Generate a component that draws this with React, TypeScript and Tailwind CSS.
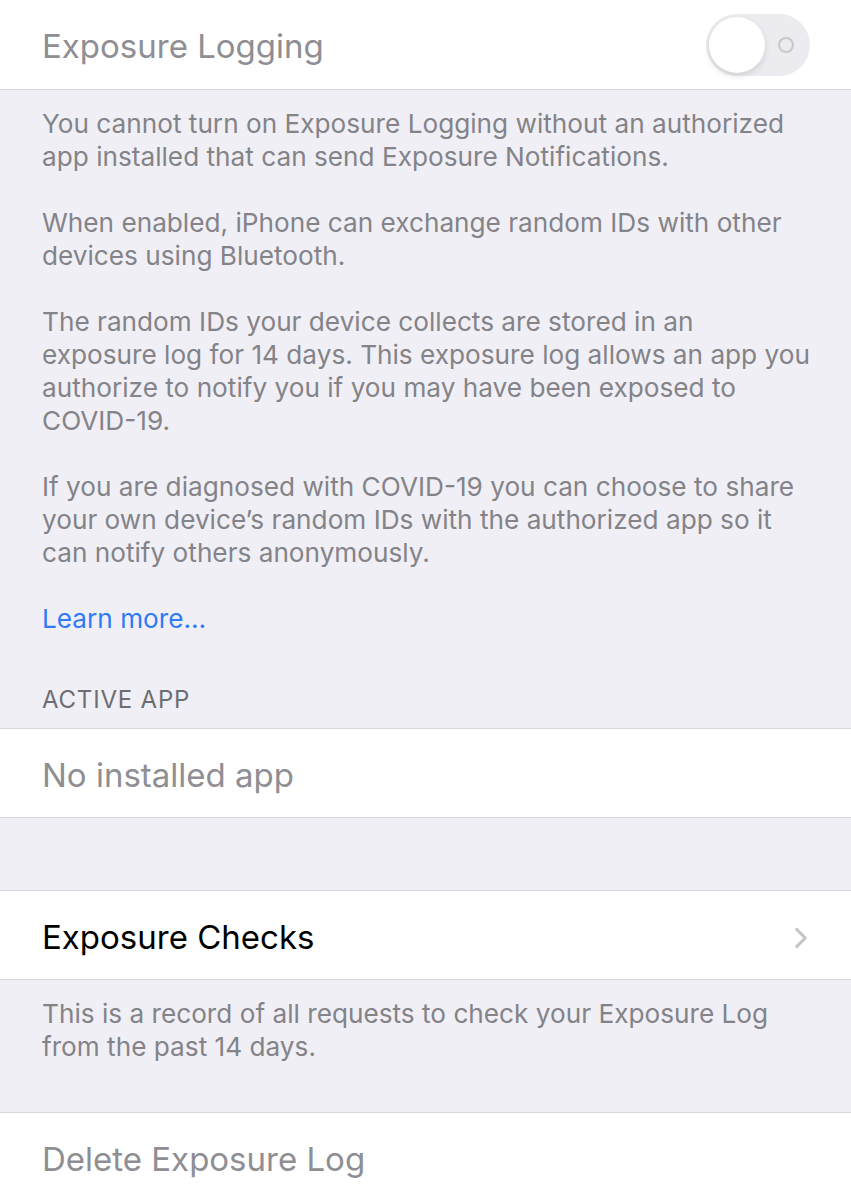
import { ChevronRight } from 'lucide-react';

const font = { fontFamily: 'Inter, "Noto Sans", sans-serif' };

function Toggle() {
  return (
    <div className="relative w-[104px] h-[62px] rounded-full bg-[#ececf0]">
      <div className="absolute left-[3px] top-[3px] w-[56px] h-[56px] rounded-full bg-white shadow-[0_3px_6px_rgba(0,0,0,0.12)]" />
      <div className="absolute left-[72px] top-[23px] w-[16px] h-[16px] rounded-full border-2 border-[#c8c8cc]" />
    </div>
  );
}

function Row({ children, className = '' }: { children: React.ReactNode; className?: string }) {
  return (
    <div className={`bg-white h-[90px] flex items-center justify-between pl-[42px] pr-[41px] border-b border-[#d6d6da] ${className}`}>
      {children}
    </div>
  );
}

// footer copy, broken the way the settings screen wraps it
const notes = [
  [
    'You cannot turn on Exposure Logging without an authorized',
    'app installed that can send Exposure Notifications.',
  ],
  ['When enabled, iPhone can exchange random IDs with other', 'devices using Bluetooth.'],
  [
    'The random IDs your device collects are stored in an',
    'exposure log for 14 days. This exposure log allows an app you',
    'authorize to notify you if you may have been exposed to',
    'COVID-19.',
  ],
  [
    'If you are diagnosed with COVID-19 you can choose to share',
    'your own device\u2019s random IDs with the authorized app so it',
    'can notify others anonymously.',
  ],
];

export default function App() {
  return (
    <div className="w-[851px] h-[1200px] overflow-hidden bg-[#f0eff5]" style={font}>
      <Row>
        <span className="pt-[4px] text-[33px] text-[#8e8e93]">Exposure Logging</span>
        <Toggle />
      </Row>

      <div className="pl-[42px] pr-[20px] pt-[17px] text-[26.2px] leading-[33px] text-[#838388]">
        {notes.map((lines, i) => (
          <p key={i} className="mb-[33px]">
            {lines.map((l) => (
              <span key={l} className="block whitespace-nowrap">{l}</span>
            ))}
          </p>
        ))}
        <p className="text-[#2f7bf5]">Learn more…</p>
        <p className="mt-[48px] pb-[12px] text-[24px] tracking-[0.8px] text-[#6d6d72]">ACTIVE APP</p>
      </div>

      <Row className="border-t">
        <span className="pt-[5px] text-[33px] text-[#8e8e93]">No installed app</span>
      </Row>

      <div className="h-[72px]" />

      <Row className="border-t">
        <span className="pt-[5px] text-[33px] text-black">Exposure Checks</span>
        <ChevronRight className="mt-[5px] w-[34px] h-[34px] text-[#c4c4c7] -mr-[8px]" strokeWidth={2.2} />
      </Row>

      <div className="pl-[42px] pr-[20px] pt-[17px] h-[132px] text-[26.2px] leading-[33px] text-[#838388]">
        <span className="block whitespace-nowrap">This is a record of all requests to check your Exposure Log</span>
        <span className="block whitespace-nowrap">from the past 14 days.</span>
      </div>

      <Row className="border-t">
        <span className="pt-[5px] text-[33px] text-[#8e8e93]">Delete Exposure Log</span>
      </Row>
    </div>
  );
}
